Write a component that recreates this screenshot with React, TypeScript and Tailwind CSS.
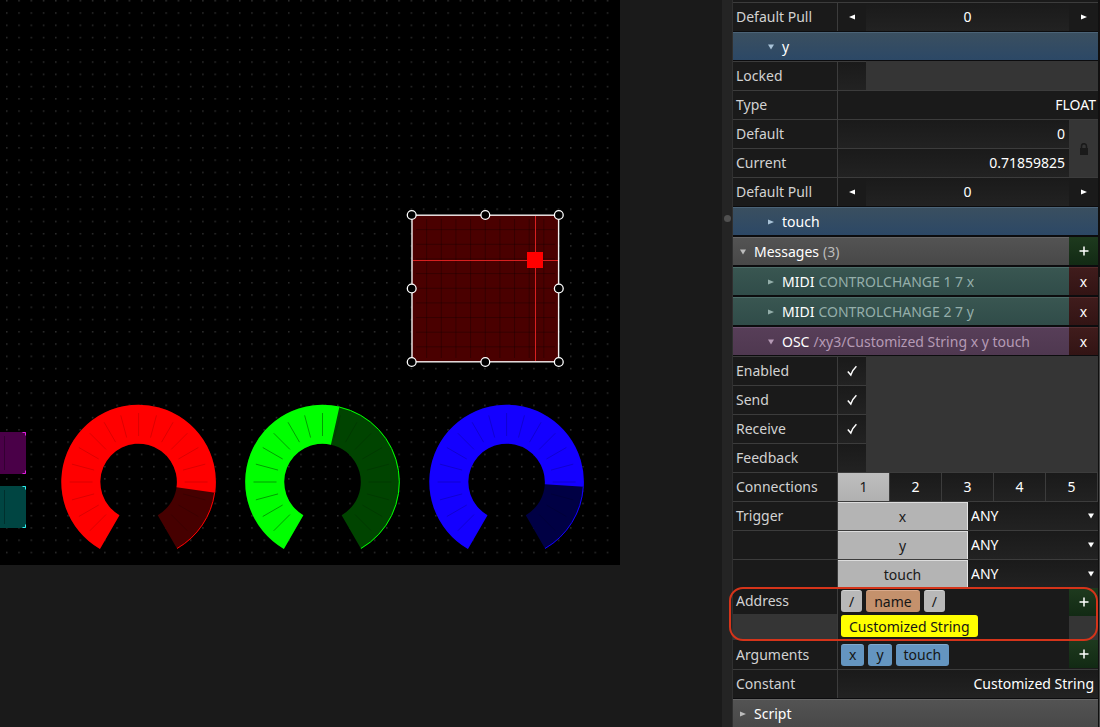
import { useState, type ReactNode } from 'react';
import { clsx } from 'clsx';

const INK_BUTTON = 'bg-linear-to-b from-[#1a1a1a] to-[#222222]';

function Triangle({ dir, className }: { dir: 'left' | 'right' | 'down'; className?: string }) {
  const points = {
    left: '6,0.5 6,5.5 0,3',
    right: '0,0.5 6,3 0,5.5',
    down: '0,0.5 6,0.5 3,5.5',
  }[dir];
  return (
    <svg viewBox="0 0 6 6" className={clsx('size-1.5 shrink-0', className)} aria-hidden="true">
      <polygon points={points} fill="currentColor" />
    </svg>
  );
}

function Label({ htmlFor, children }: { htmlFor?: string; children?: ReactNode }) {
  const cls = 'flex w-[105px] shrink-0 items-center border-r border-[#3c3c3c] bg-[#1a1a1a] pl-[3px] text-[#d2d2d2]';
  return htmlFor ? (
    <label htmlFor={htmlFor} className={cls}>{children}</label>
  ) : (
    <div className={cls}>{children}</div>
  );
}

function Row({ label, htmlFor, children }: { label?: string; htmlFor?: string; children: ReactNode }) {
  return (
    <div className="flex h-[29px] shrink-0 border-t border-[#3c3c3c]">
      <Label htmlFor={htmlFor}>{label}</Label>
      <div className="flex min-w-0 flex-1">{children}</div>
    </div>
  );
}

function PullRow({ id }: { id: string }) {
  const [value, setValue] = useState(0);
  return (
    <Row label="Default Pull" htmlFor={id}>
      <button
        type="button"
        aria-label="Decrease"
        onClick={() => setValue(value - 1)}
        className="flex w-7 items-center justify-center bg-[#1a1a1a] text-white"
      >
        <Triangle dir="left" />
      </button>
      <input
        id={id}
        value={value}
        onChange={(e) => setValue(Number(e.target.value) || 0)}
        className={clsx('min-w-0 flex-1 text-center text-white', INK_BUTTON)}
      />
      <button
        type="button"
        aria-label="Increase"
        onClick={() => setValue(value + 1)}
        className="flex w-[29px] items-center justify-center bg-[#1a1a1a] text-white"
      >
        <Triangle dir="right" />
      </button>
    </Row>
  );
}

function CheckRow({ label, checked }: { label: string; checked?: boolean }) {
  const id = `check-${label.toLowerCase()}`;
  return (
    <div className="flex h-[29px] shrink-0 bg-[#353535]">
      <div className="flex border-t border-[#3c3c3c]">
        <Label htmlFor={id}>{label}</Label>
        <div className="grid w-7 place-items-center">
          <input
            id={id}
            type="checkbox"
            defaultChecked={checked}
            className={clsx('peer col-start-1 row-start-1 size-full appearance-none', INK_BUTTON)}
          />
          <svg
            viewBox="0 0 10 12"
            className="pointer-events-none col-start-1 row-start-1 hidden h-3 w-2.5 text-white peer-checked:block"
            fill="none"
            stroke="currentColor"
            strokeWidth="1.5"
            aria-hidden="true"
          >
            <path d="M0.8 6.4 L3.8 10 C5 6.6 6.8 3.6 9.4 1.2" />
          </svg>
        </div>
      </div>
    </div>
  );
}

function NumberRow({ label, value }: { label: string; value: string }) {
  const id = `num-${label.toLowerCase()}`;
  return (
    <Row label={label} htmlFor={id}>
      <input
        id={id}
        defaultValue={value}
        className={clsx('min-w-0 flex-1 pr-1 text-right text-white', INK_BUTTON)}
      />
    </Row>
  );
}

type HeaderTone = 'blue' | 'gray' | 'teal' | 'plum';

const TONES: Record<HeaderTone, string> = {
  blue: 'border-[#4b6377] from-[#3a4f60] to-[#2c4866] text-[#a9c3d8]',
  gray: 'border-[#666666] from-[#535353] to-[#484848] text-[#bcbcbc]',
  teal: 'border-[#4d6d69] from-[#395651] to-[#304c49] text-[#94aeaa]',
  plum: 'border-[#6d526f] from-[#573e58] to-[#4f3850] text-[#b59ab5]',
};

interface HeaderProps {
  tone: HeaderTone;
  title: string;
  detail?: string;
  open?: boolean;
  nested?: boolean;
  action?: 'add' | 'remove';
}

function Header({ tone, title, detail, open, nested, action }: HeaderProps) {
  return (
    <div className="flex h-[30px] shrink-0 bg-[#0c0c0e] py-px">
      <button
        type="button"
        aria-expanded={!!open}
        className={clsx(
          'flex min-w-0 flex-1 items-center border-t bg-linear-to-b text-left',
          nested ? 'pl-[35px]' : 'pl-[7px]',
          TONES[tone],
        )}
      >
        <Triangle dir={open ? 'down' : 'right'} />
        <span className="ml-2 text-white">{title}</span>
        {detail && <span className="ml-1 truncate">{detail}</span>}
      </button>
      {action === 'add' && <AddButton label="Add message" />}
      {action === 'remove' && (
        <button
          type="button"
          aria-label={`Remove ${title} message`}
          className="w-[29px] border-t border-[#522a2a] bg-linear-to-b from-[#401c1c] to-[#321414] text-white"
        >
          x
        </button>
      )}
    </div>
  );
}

function AddButton({ label }: { label: string }) {
  return (
    <button
      type="button"
      aria-label={label}
      className="flex h-7 w-[29px] shrink-0 items-center justify-center bg-linear-to-b from-[#1e3a1e] to-[#122a14] text-white"
    >
      <svg viewBox="0 0 10 10" className="size-2.5" stroke="currentColor" strokeWidth="1.5" aria-hidden="true">
        <path d="M5 0.5v9M0.5 5h9" />
      </svg>
    </button>
  );
}

function ConnectionsRow() {
  const [active, setActive] = useState(1);
  return (
    <Row label="Connections">
      {[1, 2, 3, 4, 5].map((n) => (
        <button
          key={n}
          type="button"
          aria-pressed={n === active}
          onClick={() => setActive(n)}
          className={clsx(
            'flex-1 border-r border-[#3c3c3c]',
            n === active ? 'bg-linear-to-b from-[#bebebe] to-[#b0b0b0] text-[#1a1a1a]' : ['text-white', INK_BUTTON],
          )}
        >
          {n}
        </button>
      ))}
    </Row>
  );
}

function TriggerRow({ label, name }: { label?: string; name: string }) {
  return (
    <Row label={label}>
      <button
        type="button"
        aria-pressed="true"
        className="w-[130px] shrink-0 border-t border-r border-t-[#dddddd] border-r-[#e4e4e4] bg-[#b4b4b4] text-[#1a1a1a]"
      >
        {name}
      </button>
      <div className={clsx('grid flex-1 items-center', INK_BUTTON)}>
        <select
          aria-label={`Trigger condition for ${name}`}
          defaultValue="ANY"
          className="col-start-1 row-start-1 h-full appearance-none bg-transparent pl-[3px] text-white"
        >
          <option>ANY</option>
          <option>RISE</option>
          <option>FALL</option>
        </select>
        <Triangle dir="down" className="pointer-events-none col-start-1 row-start-1 mr-1 justify-self-end text-white" />
      </div>
    </Row>
  );
}

function Chip({ className, children }: { className: string; children: ReactNode }) {
  return (
    <button type="button" className={clsx('h-[22px] rounded-[3px] border-t px-2 leading-5 text-[#151515]', className)}>
      {children}
    </button>
  );
}

const CHIP_GRAY = 'bg-[#b8b8b8] border-[#d4d4d4]';
const CHIP_BLUE = 'bg-[#6495c0] border-[#80aacd]';

function Inspector() {
  return (
    <aside className="flex w-[365px] shrink-0 flex-col bg-[#1a1a1a]">
      <div className="h-0.5 shrink-0" />
      <PullRow id="pull-x" />
      <Header tone="blue" title="y" open nested />
      <CheckRow label="Locked" />
      <Row label="Type">
        <output className="flex flex-1 items-center justify-end pr-0.5 text-white">FLOAT</output>
      </Row>
      <div className="flex shrink-0">
        <div className="min-w-0 flex-1">
          <NumberRow label="Default" value="0" />
          <NumberRow label="Current" value="0.71859825" />
        </div>
        <button
          type="button"
          aria-label="Lock current value as default"
          className="flex w-[29px] items-center justify-center border-t border-[#3c3c3c] bg-[#353535] text-[#1a1a1a]"
        >
          <svg viewBox="0 0 10 12" className="h-3 w-2.5" aria-hidden="true">
            <path d="M2.5 6V3.2a2.5 2.5 0 0 1 5 0V6" fill="none" stroke="currentColor" strokeWidth="1.5" />
            <rect x="1" y="5" width="8" height="7" fill="currentColor" />
          </svg>
        </button>
      </div>
      <PullRow id="pull-y" />
      <Header tone="blue" title="touch" nested />
      <Header tone="gray" title="Messages" detail="(3)" open action="add" />
      <Header tone="teal" title="MIDI" detail="CONTROLCHANGE 1 7 x" nested action="remove" />
      <Header tone="teal" title="MIDI" detail="CONTROLCHANGE 2 7 y" nested action="remove" />
      <Header tone="plum" title="OSC" detail="/xy3/Customized String x y touch" open nested action="remove" />
      <CheckRow label="Enabled" checked />
      <CheckRow label="Send" checked />
      <CheckRow label="Receive" checked />
      <CheckRow label="Feedback" />
      <ConnectionsRow />
      <TriggerRow label="Trigger" name="x" />
      <TriggerRow name="y" />
      <TriggerRow name="touch" />

      <div className="relative flex h-[52px] shrink-0">
        <div className="flex w-[105px] shrink-0 flex-col border-r border-[#3c3c3c] bg-[#353535]">
          <div className="flex h-[26px] items-center bg-[#1a1a1a] pl-[3px] text-[#d2d2d2]">Address</div>
        </div>
        <div className="flex flex-1 flex-wrap content-start gap-x-1 gap-y-[3px] py-0.5 pl-[3px]">
          <Chip className={CHIP_GRAY}>/</Chip>
          <Chip className="border-[#d9a98a] bg-[#c4916c]">name</Chip>
          <Chip className={CHIP_GRAY}>/</Chip>
          <Chip className="border-[#ffff00] bg-[#ffff00]">Customized String</Chip>
        </div>
        <div className="bg-[#353535]">
          <AddButton label="Add address part" />
        </div>
        {/* highlight ring around the address property */}
        <div className="pointer-events-none absolute -top-px right-0 -bottom-px -left-1 rounded-[14px] border-2 border-[#d5341a]" />
      </div>

      <div className="flex h-[29px] shrink-0">
        <Label>Arguments</Label>
        <div className="flex flex-1 items-center gap-1 pl-[3px]">
          <Chip className={CHIP_BLUE}>x</Chip>
          <Chip className={CHIP_BLUE}>y</Chip>
          <Chip className={CHIP_BLUE}>touch</Chip>
        </div>
        <AddButton label="Add argument" />
      </div>
      <Row label="Constant" htmlFor="constant">
        <input
          id="constant"
          defaultValue="Customized String"
          className={clsx('min-w-0 flex-1 pr-1 text-right text-white', INK_BUTTON)}
        />
      </Row>
      <Header tone="gray" title="Script" />
    </aside>
  );
}

// degrees are clockwise from 12 o'clock
function polar(r: number, deg: number) {
  const a = (deg * Math.PI) / 180;
  return `${(r * Math.sin(a)).toFixed(2)} ${(-r * Math.cos(a)).toFixed(2)}`;
}

function sector(from: number, to: number, inner = 38.3, outer = 77.3) {
  const large = to - from > 180 ? 1 : 0;
  return `M${polar(outer, from)} A${outer} ${outer} 0 ${large} 1 ${polar(outer, to)} L${polar(inner, to)} A${inner} ${inner} 0 ${large} 0 ${polar(inner, from)} Z`;
}

const TICKS = Array.from({ length: 19 }, (_, i) => -135 + i * 15);

interface DialProps {
  x: number;
  color: string;
  dim: string;
  value: number;
  tick: number;
}

function Dial({ x, color, dim, value, tick }: DialProps) {
  return (
    <g transform={`translate(${x} 482)`}>
      <path d={sector(-150, 150)} fill={dim} />
      <path d={sector(-150, value)} fill={color} />
      <path d={`M${polar(76.8, value)} A76.8 76.8 0 0 1 ${polar(76.8, 150)}`} fill="none" stroke={color} />
      {TICKS.map((deg) => (
        <path
          key={deg}
          d={`M${polar(46, deg)} L${polar(69, deg)}`}
          stroke="#000000"
          strokeOpacity={deg < value ? tick : 0.15}
        />
      ))}
    </g>
  );
}

function Fader({ y, fill, edge }: { y: number; fill: string; edge: string }) {
  return (
    <g>
      <rect x="-40" y={y} width="66" height="42" fill={fill} />
      <path d={`M4.5 ${y + 4} v34`} stroke="#000000" strokeOpacity="0.3" />
      <path
        d={`M22.5 ${y + 0.5} h3 v3 M25.5 ${y + 38.5} v3 h-3`}
        fill="none"
        stroke={edge}
      />
    </g>
  );
}

const GRID = [1, 2, 3, 4, 5, 6, 7, 8, 9].map((i) => i * 14.65);
const HANDLES = [
  [411.7, 215], [485.3, 215], [558.8, 215],
  [411.7, 288.5], [558.8, 288.5],
  [411.7, 362], [485.3, 362], [558.8, 362],
];

function Artboard() {
  return (
    <svg
      viewBox="0 0 620 565"
      className="block h-[565px] w-[620px] bg-black"
      role="img"
      aria-label="Control surface layout"
    >
      <defs>
        <pattern id="dots" x="6" y="0" width="12.26" height="12.26" patternUnits="userSpaceOnUse">
          <rect x="0.2" y="0.2" width="1.2" height="1.2" fill="#484848" />
        </pattern>
      </defs>
      <rect width="615" height="558" fill="url(#dots)" />

      <Fader y={432} fill="#4a0048" edge="#e020e0" />
      <Fader y={486} fill="#004542" edge="#30f0f0" />

      <Dial x={138.6} color="#ff0000" dim="#460000" value={98} tick={0.14} />
      <Dial x={322.5} color="#00ff00" dim="#004400" value={12.7} tick={0.38} />
      <Dial x={506.6} color="#1400ff" dim="#000044" value={93.5} tick={0.18} />

      <g>
        <rect x="412" y="215" width="147" height="147" fill="#4a0000" />
        {GRID.map((d) => (
          <path
            key={d}
            d={`M${412 + d} 219 V358 M416 ${215 + d} H555`}
            stroke="#000000"
            strokeOpacity="0.28"
          />
        ))}
        <path d="M413 260.5 H558 M535.5 216 V361" stroke="#d82020" />
        <rect x="527" y="252" width="16" height="16" fill="#ff0000" />
        <rect x="412" y="215.2" width="146.6" height="146.6" fill="none" stroke="#f4f0f0" strokeWidth="1.4" />
        {HANDLES.map(([cx, cy]) => (
          <circle key={`${cx}-${cy}`} cx={cx} cy={cy} r="4.4" fill="#000000" stroke="#ffffff" strokeWidth="1.3" />
        ))}
      </g>
    </svg>
  );
}

export default function App() {
  return (
    <div className="flex h-screen overflow-hidden bg-[#1a1a1a] font-['Noto_Sans',sans-serif] text-sm">
      <main className="min-w-0 flex-1 overflow-hidden">
        <Artboard />
      </main>
      <div
        role="separator"
        aria-orientation="vertical"
        className="flex w-[11px] shrink-0 flex-col items-center border-r border-[#303030] bg-[#242424] pt-[215px]"
      >
        <span className="size-[7px] rounded-full bg-[#505050]" />
      </div>
      <Inspector />
      {/* scroll track */}
      <div className="flex w-0.5 shrink-0 flex-col border-l border-[#101010] bg-[#141010]">
        <div className="mt-[277px] flex-1 bg-[#484848]" />
      </div>
    </div>
  );
}
